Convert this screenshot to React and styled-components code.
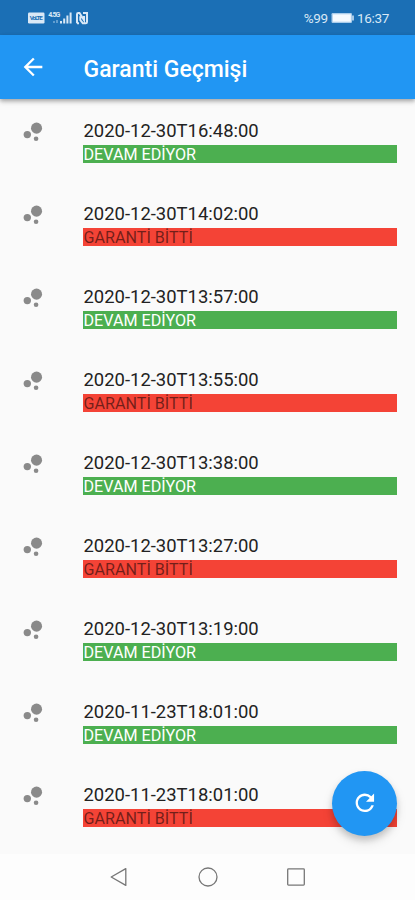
import React from 'react'
import styled, { createGlobalStyle } from 'styled-components'
import { MdArrowBack, MdBubbleChart, MdRefresh } from 'react-icons/md'

const records = [
  { date: '2020-12-30T16:48:00', active: true },
  { date: '2020-12-30T14:02:00', active: false },
  { date: '2020-12-30T13:57:00', active: true },
  { date: '2020-12-30T13:55:00', active: false },
  { date: '2020-12-30T13:38:00', active: true },
  { date: '2020-12-30T13:27:00', active: false },
  { date: '2020-12-30T13:19:00', active: true },
  { date: '2020-11-23T18:01:00', active: true },
  { date: '2020-11-23T18:01:00', active: false },
]

const SignalIcons = () => (
  <svg width="64" height="16" viewBox="0 0 64 16">
    <rect x="1" y="2.5" width="16.5" height="11" rx="1.2" fill="#d9e8f6" />
    <text x="2.8" y="10.4" fontSize="6.2" fontWeight="700" textLength="13" fill="#1b6fb5">VoLTE</text>
    <text x="21.3" y="7.3" fontSize="7" fontWeight="700" textLength="12" fill="#d9e8f6">4.5G</text>
    <path d="M27 11v2M30 10v3" stroke="#8fbce2" strokeWidth="1.2" />
    <path d="M34 11v2.5M37.2 8.5v5M40.4 5.5v8M43.6 2.5v11" stroke="#d9e8f6" strokeWidth="2" />
    <path d="M50 13.2V4.2q0-1.2 1.3-1.2h1.2l4.5 7V6M50 13.2h2M53.3 6.3V10l2.5 3.2h2.9q1.3 0 1.3-1.3V3h-4" fill="none" stroke="#d9e8f6" strokeWidth="2" />
  </svg>
)

const BatteryIcon = () => (
  <svg width="24" height="12" viewBox="0 0 24 12">
    <rect x="0.5" y="1" width="20.5" height="10" rx="1.2" fill="#a9cceb" />
    <rect x="1.8" y="2.3" width="18" height="7.4" fill="#f5faff" />
    <path d="M22 3.5v5" stroke="#c9dff3" strokeWidth="1.6" />
  </svg>
)

const Record = ({ date, active }) => (
  <Row>
    <MdBubbleChart className="icon" />
    <div className="info">
      <h4>{ date }</h4>
      <Status $active={ active }>{ active ? 'DEVAM EDİYOR' : 'GARANTİ BİTTİ' }</Status>
    </div>
  </Row>
)

const App = () => (
  <Screen>
    <GlobalStyle />
    <StatusBar>
      <SignalIcons />
      <div className="right">
        <span className="percent">%99</span>
        <BatteryIcon />
        <span className="clock">16:37</span>
      </div>
    </StatusBar>
    <AppBar>
      <MdArrowBack className="back" />
      <h1>Garanti Geçmişi</h1>
    </AppBar>
    <List>
      { records.map((record, index) => <Record key={ index } { ...record } />) }
    </List>
    <NavBar>
      <svg width="20" height="20" viewBox="0 0 20 20">
        <path d="M2.2 10 16.8 1.6v16.8Z" />
      </svg>
      <svg width="20" height="20" viewBox="0 0 20 20">
        <circle cx="10" cy="10" r="9" />
      </svg>
      <svg width="20" height="20" viewBox="0 0 20 20">
        <rect x="1.7" y="1.9" width="16.6" height="16.2" rx="0.8" />
      </svg>
    </NavBar>
    <RefreshButton>
      <MdRefresh />
    </RefreshButton>
  </Screen>
)

const GlobalStyle = createGlobalStyle`
  * {
    box-sizing: border-box;
  }

  body {
    margin: 0;
    font-family: Roboto, 'Liberation Sans', sans-serif;
  }

  h1, h4 {
    margin: 0;
  }
`

const Screen = styled.div`
  position: relative;
  display: flex;
  flex-direction: column;
  width: 415px;
  height: 900px;
  overflow: hidden;
  background-color: #fafafa;
`

const StatusBar = styled.div`
  flex: none;
  display: flex;
  align-items: center;
  justify-content: space-between;
  height: 35px;
  padding: 1px 26px 0 27px;
  background-color: #1b6fb5;
  color: #d9e8f6;

  .right {
    display: flex;
    align-items: center;
  }

  span {
    display: block;
    font-size: 13.5px;
    line-height: 16px;
    letter-spacing: -0.3px;
    white-space: nowrap;
  }

  .percent {
    margin-right: 3px;
  }

  .clock {
    margin-left: 2px;
  }
`

const AppBar = styled.header`
  position: relative;
  flex: none;
  display: flex;
  align-items: center;
  height: 64px;
  padding-left: 19px;
  background-color: #2196f3;
  color: #fff;
  box-shadow: 0 2px 4px rgba(0, 0, 0, 0.28), 0 3px 6px rgba(0, 0, 0, 0.1);

  .back {
    width: 28px;
    height: 28px;
  }

  h1 {
    margin: 4px 0 0 36.5px;
    font-size: 23px;
    line-height: 27px;
    font-weight: 500;
  }
`

const List = styled.main`
  flex: 1;
  min-height: 0;
  overflow: hidden;
`

const Row = styled.article`
  display: flex;
  height: 83.06px;
  padding: 19px 18px 0 19px;

  .icon {
    flex: none;
    width: 27.7px;
    height: 27.7px;
    color: #8a8a8a;
  }

  .info {
    flex: 1;
    margin-left: 36.3px;
  }

  h4 {
    padding: 2px 0 0 0.5px;
    font-size: 18.45px;
    line-height: 22px;
    height: 26.5px;
    font-weight: 400;
    color: #222;
  }
`

const Status = styled.div`
  height: 18.5px;
  padding-left: 0.5px;
  font-size: 16.15px;
  line-height: 19px;
  background-color: ${ ({ $active }) => ($active ? '#4caf50' : '#f44336') };
  color: ${ ({ $active }) => ($active ? '#fff' : 'rgba(0, 0, 0, 0.54)') };
`

const NavBar = styled.nav`
  flex: none;
  display: flex;
  align-items: center;
  justify-content: space-between;
  height: 46px;
  padding: 0 109px;
  background-color: #fdfdfd;

  svg {
    fill: none;
    stroke: #777;
    stroke-width: 1.3;
    stroke-linejoin: round;
  }
`

const RefreshButton = styled.button`
  position: absolute;
  right: 18px;
  bottom: 64.5px;
  display: flex;
  align-items: center;
  justify-content: center;
  width: 65px;
  height: 65px;
  padding: 0;
  border: none;
  border-radius: 50%;
  background-color: #2196f3;
  color: #fff;
  box-shadow: 0 4px 6px rgba(0, 0, 0, 0.16), 0 6px 12px rgba(0, 0, 0, 0.1);

  svg {
    width: 27.7px;
    height: 27.7px;
  }
`

export default App
